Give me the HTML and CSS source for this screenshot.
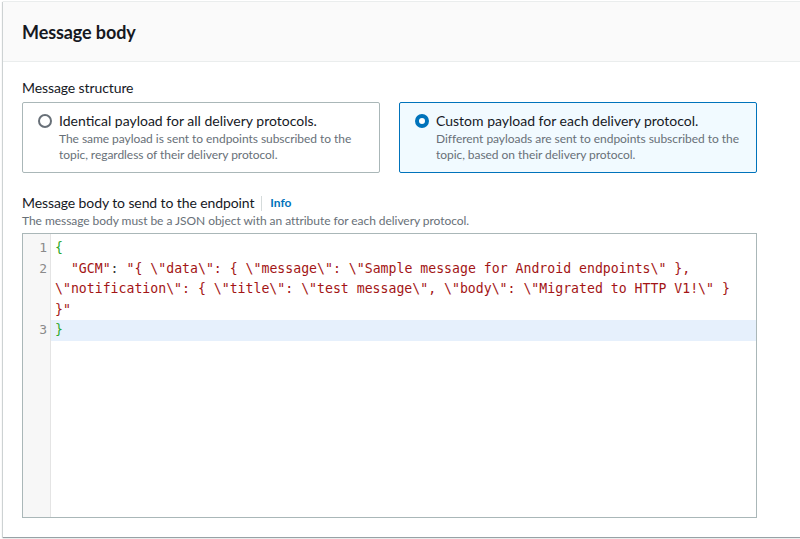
FILE: index.html
```html
<!DOCTYPE html>
<html lang="en">
<head>
<meta charset="utf-8">
<title>Message body</title>
<link rel="stylesheet" href="styles.css">
</head>
<body>
<section class="container">
  <header class="container-header">
    <h2 class="title">Message body</h2>
  </header>
  <div class="container-body">
    <div class="field-label">Message structure</div>
    <div class="tiles">
      <label class="tile">
        <span class="radio"></span>
        <span class="tile-text">
          <span class="tile-title">Identical payload for all delivery protocols.</span>
          <span class="tile-desc">The same payload is sent to endpoints subscribed to the topic, regardless of their delivery protocol.</span>
        </span>
      </label>
      <label class="tile tile-selected">
        <span class="radio radio-checked"></span>
        <span class="tile-text">
          <span class="tile-title">Custom payload for each delivery protocol.</span>
          <span class="tile-desc">Different payloads are sent to endpoints subscribed to the topic, based on their delivery protocol.</span>
        </span>
      </label>
    </div>

    <div class="field-label field-label-spaced">
      <span>Message body to send to the endpoint</span>
      <span class="divider"></span>
      <a class="info">Info</a>
    </div>
    <div class="field-desc">The message body must be a JSON object with an attribute for each delivery protocol.</div>

    <div class="editor">
      <div class="line"><span class="ln">1</span><span class="code"><span class="br">{</span></span></div>
      <div class="line"><span class="ln">2</span><span class="code">  <span class="str">"GCM"</span><span class="pn">:</span> <span class="str">"{ \"data\": { \"message\": \"Sample message for Android endpoints\" },</span> <span class="str">\"notification\": { \"title\": \"test message\", \"body\": \"Migrated to HTTP V1!\" }</span> <span class="str">}"</span></span></div>
      <div class="line line-active"><span class="ln">3</span><span class="code"><span class="br">}</span></span></div>
    </div>
  </div>
</section>
</body>
</html>
```
FILE: styles.css
```css
html, body {
  margin: 0;
  padding: 0;
  background: #ffffff;
  overflow: hidden;
}

body {
  font-family: Lato, "Open Sans", sans-serif;
  color: #16191f;
  width: 800px;
  height: 539px;
}

.container {
  margin: 1px 0 0 3px;
  width: 830px;
  background: #ffffff;
  border-top: 1px solid #eaeded;
  box-shadow: 0 1px 1px 0 rgba(0, 28, 36, 0.3), -1px 1px 1px 0 rgba(0, 28, 36, 0.15);
}

.container-header {
  background: #fafafa;
  border-bottom: 1px solid #eaeded;
  height: 59px;
  padding: 0 19px;
  display: flex;
  align-items: center;
}

.title {
  margin: 0;
  font-size: 18px;
  line-height: 24px;
  font-weight: 700;
  letter-spacing: -0.1px;
}

.container-body {
  width: 735px;
  padding: 16px 19px 19px;
}

.field-label {
  font-size: 14px;
  line-height: 20px;
  margin-bottom: 4px;
  display: flex;
  align-items: center;
  letter-spacing: -0.1px;
}

.field-label-spaced {
  margin-top: 20px;
  margin-bottom: 0;
}

.divider {
  width: 1px;
  height: 15px;
  background: #d5dbdb;
  margin: 0 8px 0 7px;
}

.info {
  font-size: 12px;
  font-weight: 700;
  color: #0073bb;
  letter-spacing: 0;
}

.field-desc {
  font-size: 12px;
  line-height: 16px;
  color: #687078;
  margin-bottom: 4px;
  letter-spacing: -0.05px;
}

.tiles {
  display: grid;
  grid-template-columns: 1fr 1fr;
  column-gap: 19px;
}

.tile {
  display: flex;
  align-items: flex-start;
  border: 1px solid #aab7b8;
  border-radius: 2px;
  padding: 8px 12px 9px 15px;
  height: 52px;
}

.tile-selected {
  background: #f1faff;
  border-color: #0073bb;
}

.radio {
  flex: none;
  box-sizing: border-box;
  width: 14px;
  height: 14px;
  border-radius: 50%;
  border: 2px solid #687078;
  margin-top: 3px;
  margin-right: 7px;
  background: #fff;
}

.radio-checked {
  border: 4px solid #0073bb;
}

.tile-text {
  display: flex;
  flex-direction: column;
}

.tile-title {
  font-size: 14px;
  line-height: 20px;
}

.tile-desc {
  font-size: 12px;
  line-height: 16px;
  color: #687078;
  letter-spacing: -0.05px;
}

.editor {
  box-sizing: border-box;
  height: 285px;
  border: 1px solid #aab7b8;
  padding-top: 4px;
  background: linear-gradient(90deg, #f7f7f7 0 27px, #e4e4e4 27px 28px, #ffffff 28px);
  font-family: "DejaVu Sans Mono", monospace;
  font-size: 13.2px;
  line-height: 20.5px;
}

.line {
  display: grid;
  grid-template-columns: 28px 1fr;
}

.ln {
  text-align: right;
  padding-right: 4px;
  color: #8a8a8a;
  font-size: 13px;
}

.code {
  white-space: pre-wrap;
  padding: 0 10px 0 4px;
  color: #333;
}

.line-active .code {
  background: #e6f0fc;
}

.br {
  color: #2ca82c;
}

.str {
  color: #a31515;
}

.pn {
  color: #333;
}
```
